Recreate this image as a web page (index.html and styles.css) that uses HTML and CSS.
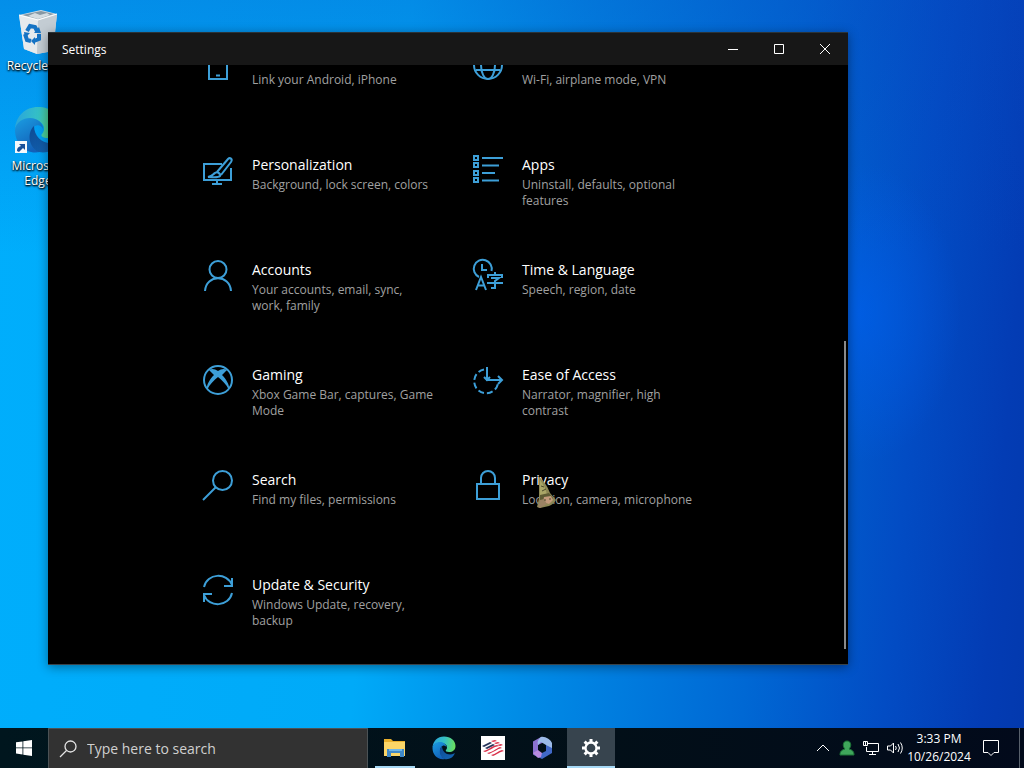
FILE: index.html
```html
<!DOCTYPE html>
<html lang="en">
<head>
    <meta charset="UTF-8">
    <meta name="viewport" content="width=device-width, initial-scale=1.0">
    <title>Settings</title>
    <link rel="stylesheet" href="styles.css">
</head>
<body>

<!-- Shared gradients and the Edge logo -->
<svg class="defs" width="0" height="0" aria-hidden="true">
    <defs>
        <linearGradient id="edgeTop" x1="0" y1="0.4" x2="1" y2="0.5">
            <stop offset="0" stop-color="#2aa5dc"/>
            <stop offset="0.5" stop-color="#35c1c5"/>
            <stop offset="1" stop-color="#6be05a"/>
        </linearGradient>
        <linearGradient id="edgeLeft" x1="0" y1="0" x2="0.5" y2="1">
            <stop offset="0" stop-color="#1b9de2"/>
            <stop offset="1" stop-color="#1260b8"/>
        </linearGradient>
        <linearGradient id="edgeDark" x1="0" y1="0" x2="1" y2="1">
            <stop offset="0" stop-color="#0d4a94"/>
            <stop offset="1" stop-color="#1467b5"/>
        </linearGradient>
    </defs>
    <symbol id="edge" viewBox="0 0 48 48">
        <path d="M1 23C2 10 11 1 24 1c13 0 23 8 23 19 0 8-6 12-13 12-5 0-8-2-6-4 3-3 3-9-2-12C17 11 4 13 1 23z" fill="url(#edgeTop)"/>
        <path d="M1 24c1-8 8-12 15-12 8 0 13 5 13 11-1-3-5-5-8-3-7 4-7 19 5 26C12 49 1 38 1 24z" fill="url(#edgeLeft)"/>
        <path d="M20 20c-7 6-6 21 5 26 9 2 17-3 20-10 1-1 0-2-1-1-11 6-24-2-24-15z" fill="url(#edgeDark)"/>
    </symbol>
</svg>

<main class="desktop">
    <div class="shortcuts">
        <a class="shortcut" href="#">
            <svg class="shortcut-icon" viewBox="0 0 48 48">
                <path d="M5 9l22-5 16 4-4 37-16 3-13-5z" fill="#d4dce2"/>
                <path d="M5 9l19 5-1 34-13-5z" fill="#e6eaed"/>
                <path d="M24 14l19-6-4 37-16 3z" fill="#c3ccd3"/>
                <path d="M8 9l19-4 13 3-16 5z" fill="#8798a4"/>
                <path d="M14 10l7-3 5 2 7-2 3 2-12 4z" fill="#d5dde2"/>
                <path d="M5 9l19 5 19-6" fill="none" stroke="#fff"/>
                <g fill="none" stroke="#1573c4" stroke-width="4">
                    <path d="M13 25l3-5 5 1 2 4"/>
                    <path d="M11 28l2 6 4 1"/>
                    <path d="M20 35l5-2 0-5"/>
                </g>
                <path d="M20 27l7 0-2-6zM10 26l6 1-5 5zM21 31v8l-4-4z" fill="#1573c4"/>
            </svg>
            <span>Recycle Bin</span>
        </a>
        <a class="shortcut" href="#">
            <svg class="shortcut-icon" viewBox="0 0 48 48">
                <use href="#edge"/>
                <path d="M1 35h12v12H1z" fill="#f4f8fb"/>
                <path d="M5 38h6v6l-2-2-4 4-2-1c0-3 1-4 4-5z" fill="#174f99"/>
            </svg>
            <span>Microsoft Edge</span>
        </a>
    </div>

    <section class="window">
        <header class="titlebar">
            <h1>Settings</h1>
            <div class="window-buttons">
                <button type="button" aria-label="Minimize">
                    <svg width="12" height="12" viewBox="0 0 12 12"><path d="M1 6.500h10"/></svg>
                </button>
                <button type="button" aria-label="Maximize">
                    <svg width="12" height="12" viewBox="0 0 12 12"><path d="M1.500 1.500h9v9h-9z"/></svg>
                </button>
                <button type="button" aria-label="Close">
                    <svg width="12" height="12" viewBox="0 0 12 12"><path d="M1 1l10 10M11 1L1 11"/></svg>
                </button>
            </div>
        </header>

        <div class="content">
            <nav class="categories">
                <!-- Top row is scrolled under the title bar -->
                <a class="category scrolled" href="#" aria-label="Phone">
                    <svg class="category-icon" viewBox="0 0 30 30"><path d="M6 1h18v28H6zM13 25.500h4"/></svg>
                    <p>Link your Android, iPhone</p>
                </a>
                <a class="category scrolled" href="#" aria-label="Network &amp; Internet">
                    <svg class="category-icon" viewBox="0 0 30 30"><circle cx="15" cy="15" r="14"/><ellipse cx="15" cy="15" rx="7" ry="14"/><path d="M3 9h24M3 20h24"/></svg>
                    <p>Wi-Fi, airplane mode, VPN</p>
                </a>
                <a class="category" href="#">
                    <svg class="category-icon" viewBox="0 0 30 30">
                        <path d="M19 9H1v16h27V13M14 25v4M9 29h10"/>
                        <path d="M14 17L25 4c2-2 5 0 3 3L18 20"/>
                        <path d="M14 17l4 3M12 18c3-2 6 1 5 3-2 2-6 1-12 1 5-1 5-3 7-4z"/>
                    </svg>
                    <div>
                        <h2>Personalization</h2>
                        <p>Background, lock screen, colors</p>
                    </div>
                </a>
                <a class="category" href="#">
                    <svg class="category-icon" viewBox="0 0 30 30">
                        <path d="M1 1h4v4H1zM1 8h4v4H1zM1 16h4v4H1zM1 23h4v4H1z"/>
                        <path d="M9 3h21M9 10.500h17M9 18h13M9 25.500h17"/>
                    </svg>
                    <div>
                        <h2>Apps</h2>
                        <p>Uninstall, defaults, optional features</p>
                    </div>
                </a>
                <a class="category" href="#">
                    <svg class="category-icon" viewBox="0 0 30 30"><circle cx="15" cy="9.500" r="8.500"/><path d="M2 31C3 14 27 14 28 31"/></svg>
                    <div>
                        <h2>Accounts</h2>
                        <p>Your accounts, email, sync, work, family</p>
                    </div>
                </a>
                <a class="category" href="#">
                    <svg class="category-icon" viewBox="0 0 30 30">
                        <path d="M6 17A9 9 0 1 1 18.500 11M9 4v6h5"/>
                        <path d="M3 30l5-13 5 13M5 25.500h6"/>
                        <path d="M22 12v3M15 18v-3h14v3M18 18h8l-4 3v7h-4M14 23h16"/>
                    </svg>
                    <div>
                        <h2>Time &amp; Language</h2>
                        <p>Speech, region, date</p>
                    </div>
                </a>
                <a class="category" href="#">
                    <svg class="category-icon" viewBox="0 0 30 30">
                        <circle cx="15" cy="15" r="14"/>
                        <path class="solid" d="M6 5c3-2 6-1 9 1 3-2 6-3 9-1l-5 5c4 4 8 10 7 15-3-6-7-10-11-13-4 3-8 7-11 13-1-5 3-11 7-15z"/>
                    </svg>
                    <div>
                        <h2>Gaming</h2>
                        <p>Xbox Game Bar, captures, Game Mode</p>
                    </div>
                </a>
                <a class="category" href="#">
                    <svg class="category-icon" viewBox="0 0 30 30">
                        <path stroke-dasharray="6 3" d="M11 4.500a12 12 0 1 0 14 14"/>
                        <path d="M14 2v13h15M25 11l4 4-4 4M11 12l3 3 3-3"/>
                    </svg>
                    <div>
                        <h2>Ease of Access</h2>
                        <p>Narrator, magnifier, high contrast</p>
                    </div>
                </a>
                <a class="category" href="#">
                    <svg class="category-icon" viewBox="0 0 30 30"><circle cx="19.500" cy="10.500" r="9.500"/><path d="M12.500 17.500L0 30"/></svg>
                    <div>
                        <h2>Search</h2>
                        <p>Find my files, permissions</p>
                    </div>
                </a>
                <a class="category" href="#">
                    <svg class="category-icon" viewBox="0 0 30 30"><path d="M4 14h22v15H4zM8 14V8a7 7 0 0 1 14 0v6"/></svg>
                    <div>
                        <h2>Privacy</h2>
                        <p>Location, camera, microphone</p>
                    </div>
                </a>
                <a class="category" href="#">
                    <svg class="category-icon" viewBox="0 0 30 30">
                        <path d="M1 12C4-2 24-3 29 10M29 3v8h-8"/>
                        <path d="M29 18C26 32 6 33 1 20M1 27v-8h8"/>
                    </svg>
                    <div>
                        <h2>Update &amp; Security</h2>
                        <p>Windows Update, recovery, backup</p>
                    </div>
                </a>
            </nav>
            <div class="scroll-thumb"></div>
        </div>
    </section>

    <!-- Custom gnome pointer -->
    <svg class="pointer" width="22" height="32" viewBox="0 0 22 32">
        <path d="M3 0c4 3 8 8 11 16l6 7c-2 3-4 5-7 6l-9 2-3-1 2-9z" fill="#8c8754"/>
        <path d="M4 3c3 4 6 9 7 15l-7 2z" fill="#a9a667"/>
        <path d="M4 18l9-2 4 5-4 3-9-1z" fill="#5d5b34"/>
        <path d="M8 20l7-1 2 4-4 4-6-2z" fill="#c39a7c"/>
        <path d="M4 23l4-1 3 5-7 4-2-1z" fill="#9b8263"/>
        <path d="M5 9l3 1M6 14l4-2M8 23h2M13 22h2" stroke="#4b4a2b"/>
    </svg>
</main>

<footer class="taskbar">
    <button type="button" class="start" aria-label="Start">
        <svg width="16" height="16" viewBox="0 0 16 16" fill="#fff"><path d="M0 2.300L6.500 1.400v6.100H0zM7.300 1.300L16 0v7.500H7.300zM0 8.300h6.500v6.200L0 13.600zM7.300 8.300H16V16l-8.700-1.300z"/></svg>
    </button>
    <label class="search">
        <svg width="18" height="18" viewBox="0 0 18 18" fill="none" stroke="#e4e4e4" stroke-width="1.300"><circle cx="11.500" cy="6.500" r="5.500"/><path d="M7.500 10.500L1 17"/></svg>
        <input type="text" placeholder="Type here to search" aria-label="Type here to search">
    </label>

    <div class="apps">
        <button type="button" class="app running" aria-label="File Explorer">
            <svg width="24" height="24" viewBox="0 0 24 24">
                <path d="M1 3h7l2 2h12v15H1z" fill="#e9b02c"/>
                <path d="M1 6h21v14H1z" fill="#fcd667"/>
                <path d="M4 21v-8h17v8h-4v-4H8v4z" fill="#4089c8"/>
                <path d="M6 13h13v2H6z" fill="#70b7e7"/>
            </svg>
        </button>
        <button type="button" class="app" aria-label="Microsoft Edge">
            <svg width="24" height="24"><use href="#edge"/></svg>
        </button>
        <button type="button" class="app" aria-label="Bank of America">
            <svg width="24" height="24" viewBox="0 0 24 24">
                <path d="M0 0h24v24H0z" fill="#fff"/>
                <path d="M1 10l8-4 2 1-8 4zM4 12l8-4 2 1-8 4z" fill="#27345b"/>
                <path d="M10 5l4-1 2 1-4 1zM13 7l4-1 2 1-4 1zM16 9l4-1 2 1-3 1z" fill="#d9304a"/>
                <path d="M2 15c6-1 8-5 14-6l2 1c-6 1-8 4-14 6zM6 17c6-1 8-4 13-6l2 1c-5 1-8 4-13 6zM10 19c5-1 7-4 11-5l2 1c-5 1-6 3-11 5z" fill="#d9304a"/>
            </svg>
        </button>
        <button type="button" class="app" aria-label="Microsoft 365">
            <svg width="24" height="24" viewBox="0 0 24 24">
                <path d="M11 1L3 5.500v13L8 21l2-4-2-2V9l8-4z" fill="#8b72d0"/>
                <path d="M11 1c4-1 10 3 11 6v8l-6-3V9l-5-3-3 3c-1-3 0-6 3-8z" fill="#9cbbe9"/>
                <path d="M22 12v5l-10 6-8-4 8-2 4-2v-6z" fill="#4169c8"/>
                <path d="M3 17l5-3 4 3-1 4-3 1z" fill="#b98bdf"/>
            </svg>
        </button>
        <button type="button" class="app active" aria-label="Settings">
            <svg width="20" height="20" viewBox="0 0 20 20" fill="none" stroke="#fff">
                <circle cx="10" cy="10" r="5.500" stroke-width="2.300"/>
                <path stroke-width="3" d="M10 1v3M10 16v3M1 10h3M16 10h3M3.600 3.600l2.200 2.200M14.200 14.200l2.200 2.200M3.600 16.400l2.200-2.200M14.200 5.800l2.200-2.200"/>
            </svg>
        </button>
    </div>

    <div class="tray">
        <button type="button" class="tray-button" aria-label="Show hidden icons">
            <svg width="16" height="16" viewBox="0 0 16 16"><path d="M2 11l6-6 6 6"/></svg>
        </button>
        <button type="button" class="tray-button" aria-label="User status">
            <svg width="16" height="16" viewBox="0 0 16 16">
                <path class="status" d="M1 15c0-4 2-5 5-6-3-3-2-8 2-8s5 5 2 8c3 1 5 2 5 6z"/>
            </svg>
        </button>
        <button type="button" class="tray-button" aria-label="Network">
            <svg width="16" height="16" viewBox="0 0 16 16"><path d="M5 3.500h10.500v8H3.500V7M9.500 11.500v3M6 14.500h7M.5 1.500h4v4h-4zM2.500 1v4"/></svg>
        </button>
        <button type="button" class="tray-button" aria-label="Volume">
            <svg width="16" height="16" viewBox="0 0 16 16"><path d="M.5 6v4h3l3 3V3l-3 3zM8.500 6q1.500 2 0 4M11 4q3 4 0 8M13.500 2.500q3.500 5.500 0 11"/></svg>
        </button>
        <button type="button" class="clock"><span>3:33 PM</span><span>10/26/2024</span></button>
        <button type="button" class="notifications" aria-label="Notifications">
            <svg width="18" height="18" viewBox="0 0 18 18"><path d="M1.500 1.500h15v12H12l-3 3-3-3H1.500z"/></svg>
        </button>
    </div>
</footer>

</body>
</html>
```
FILE: styles.css
```css
* {
    box-sizing: border-box;
}

body {
    margin: 0;
    height: 100vh;
    display: flex;
    flex-direction: column;
    overflow: hidden;
    font-family: "Open Sans", "Noto Sans", sans-serif;
    font-size: 12px;
    color: #fff;
}

h1, h2, p {
    margin: 0;
    font-weight: normal;
}

a {
    color: inherit;
    text-decoration: none;
}

button {
    display: flex;
    align-items: center;
    justify-content: center;
    padding: 0;
    border: none;
    background: none;
    color: inherit;
    font: inherit;
}

.defs {
    position: absolute;
}

/* Desktop */
.desktop {
    flex: 1;
    min-height: 0;
    position: relative;
    background:
        radial-gradient(ellipse 100px 150px at 84% 43%, rgba(0, 96, 240, 0.6), transparent),
        linear-gradient(180deg, rgba(10, 70, 190, 0.3), transparent 35%),
        linear-gradient(95deg, #00aefc 0%, #00aaf8 38%, #008be6 54%, #0068d4 74%, #024cc4 87%, #033cb4 96%, #0339ae 100%);
}

.shortcuts {
    width: 76px;
    padding-top: 6px;
}

.shortcut {
    display: flex;
    flex-direction: column;
    align-items: center;
    gap: 4px;
    height: 100px;
    line-height: 15px;
    text-align: center;
    text-shadow: 0 1px 2px #000, 1px 1px 2px #000;
}

.shortcut-icon {
    width: 48px;
    height: 48px;
}

/* Settings window */
.window {
    position: absolute;
    top: 32px;
    right: 176px;
    bottom: 63px;
    left: 48px;
    display: flex;
    flex-direction: column;
    border-top: 1px solid #2b3338;
    border-bottom: 1px solid #39434a;
    background-color: #000;
    box-shadow: 0 2px 10px rgba(0, 0, 0, 0.4);
}

.titlebar {
    flex: none;
    display: flex;
    align-items: center;
    justify-content: space-between;
    height: 32px;
    padding-left: 14px;
    background-color: #171717;
}

.titlebar h1 {
    font-size: 12px;
}

.window-buttons {
    display: flex;
}

.window-buttons button {
    width: 46px;
    height: 32px;
}

.window-buttons svg {
    fill: none;
    stroke: #fff;
}

.content {
    flex: 1;
    min-height: 0;
    position: relative;
    display: flex;
    flex-direction: column;
    align-items: center;
    justify-content: flex-end;
    padding-bottom: 24px;
    overflow: hidden;
}

.categories {
    display: grid;
    grid-template-columns: repeat(2, 270px);
    grid-auto-rows: 65px;
    row-gap: 40px;
}

.category {
    display: flex;
    gap: 19px;
    padding: 0 12px 0 25px;
}

.category-icon {
    flex: none;
    width: 30px;
    height: 30px;
    overflow: visible;
    fill: none;
    stroke: #3d9fd8;
    stroke-width: 2;
}

.category-icon .solid {
    fill: #3d9fd8;
    stroke: none;
}

.category h2 {
    font-size: 14px;
    line-height: 20px;
}

.category p {
    margin-top: 2px;
    line-height: 16px;
    color: #a0a0a0;
}

.category.scrolled p {
    margin-top: 22px;
}

.scroll-thumb {
    position: absolute;
    top: 46%;
    right: 2px;
    bottom: 15px;
    width: 2px;
    background-color: #8a8a8a;
}

.pointer {
    position: absolute;
    top: 477px;
    left: 536px;
}

/* Taskbar */
.taskbar {
    flex: none;
    display: flex;
    height: 40px;
    background: linear-gradient(90deg, #00161e, #020f18 60%, #020a1b);
}

.start {
    width: 48px;
}

.search {
    display: flex;
    align-items: center;
    gap: 10px;
    width: 320px;
    padding: 0 10px;
    border: 1px solid #4b5255;
    border-bottom: none;
    background-color: #323232;
}

.search input {
    flex: 1;
    min-width: 0;
    padding: 0;
    border: none;
    outline: none;
    background: none;
    color: #fff;
    font: inherit;
    font-size: 14px;
}

.search input::placeholder {
    color: #d0d0d0;
    opacity: 1;
}

.apps {
    display: flex;
    gap: 1px;
    margin-left: 3px;
}

.app {
    width: 48px;
}

.running {
    background: linear-gradient(#a5d8f5, #a5d8f5) center bottom / 40px 2px no-repeat;
}

.active {
    background-color: #37444e;
    border-bottom: 2px solid #a5d8f5;
    padding-top: 2px;
}

.tray {
    display: flex;
    margin-left: auto;
    margin-right: 4px;
    border-right: 1px solid #58616c;
}

.tray-button {
    width: 24px;
}

.tray svg {
    fill: none;
    stroke: #fff;
}

.tray .status {
    fill: #3fa65b;
    stroke: #1c7537;
}

.clock {
    flex-direction: column;
    width: 64px;
    line-height: 18px;
}

.notifications {
    width: 40px;
    margin-right: 8px;
}
```
